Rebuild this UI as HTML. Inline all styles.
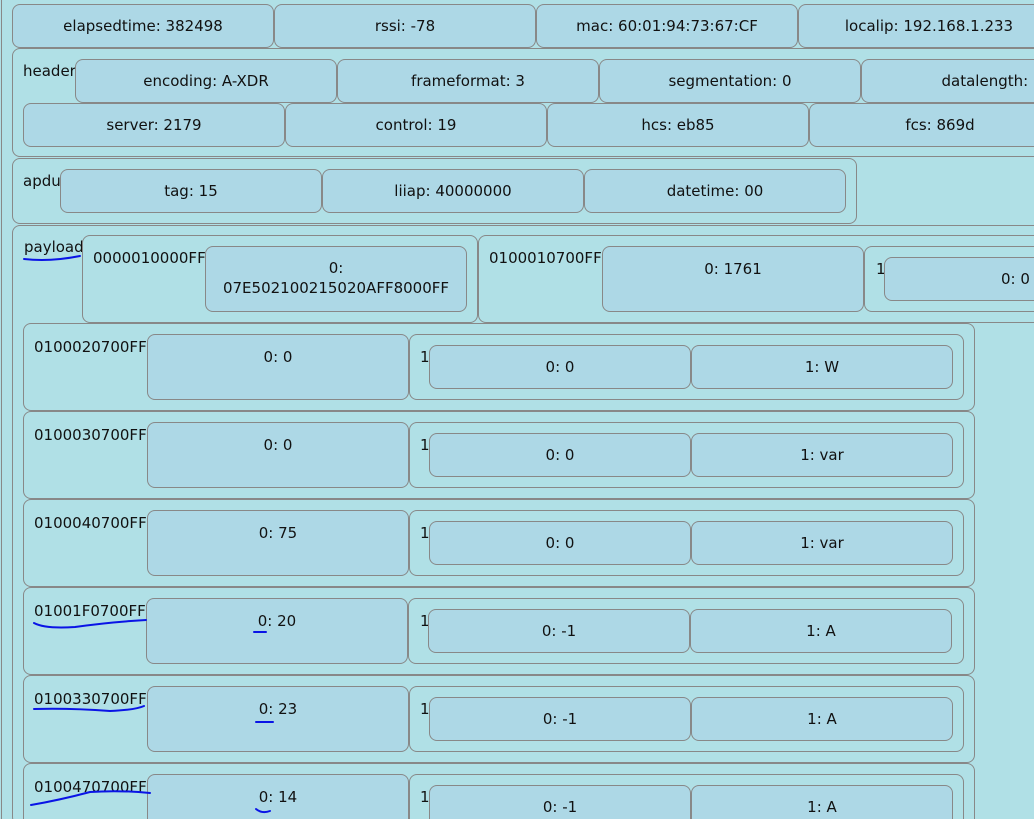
<!DOCTYPE html>
<html style="overflow:hidden;height:819px"><head><meta charset="utf-8"><style>
body{margin:0;width:1034px;height:819px;overflow:hidden;background:#b0e0e6;font-family:"DejaVu Sans","Liberation Sans",sans-serif;font-size:15px;color:#111;position:relative}
.b{position:absolute;box-sizing:border-box;border:1px solid #888;border-radius:8px;background:#add8e6;text-align:center}
.o{position:absolute;box-sizing:border-box;border:1px solid #888;border-radius:8px;background:#b0e0e6}
.c{line-height:43px}
.t{position:absolute;white-space:nowrap}
.p{padding-top:12px;line-height:20px}
</style></head><body>
<div style="position:absolute;left:1px;top:0;width:1px;height:819px;background:#888"></div>
<div class="b c" style="left:12px;top:4px;width:262px;height:44px">elapsedtime: 382498</div>
<div class="b c" style="left:274px;top:4px;width:262px;height:44px">rssi: -78</div>
<div class="b c" style="left:536px;top:4px;width:262px;height:44px">mac: 60:01:94:73:67:CF</div>
<div class="b c" style="left:798px;top:4px;width:262px;height:44px">localip: 192.168.1.233</div>

<div class="o" style="left:12px;top:48px;width:1040px;height:109px"></div>
<div class="t" style="left:23px;top:62px">header</div>
<div class="b c" style="left:75px;top:59px;width:262px;height:44px">encoding: A-XDR</div>
<div class="b c" style="left:337px;top:59px;width:262px;height:44px">frameformat: 3</div>
<div class="b c" style="left:599px;top:59px;width:262px;height:44px">segmentation: 0</div>
<div class="b c" style="left:861px;top:59px;width:262px;height:44px">datalength: 5</div>
<div class="b c" style="left:23px;top:103px;width:262px;height:44px">server: 2179</div>
<div class="b c" style="left:285px;top:103px;width:262px;height:44px">control: 19</div>
<div class="b c" style="left:547px;top:103px;width:262px;height:44px">hcs: eb85</div>
<div class="b c" style="left:809px;top:103px;width:262px;height:44px">fcs: 869d</div>

<div class="o" style="left:12px;top:158px;width:845px;height:66px"></div>
<div class="t" style="left:23px;top:172px">apdu</div>
<div class="b c" style="left:60px;top:169px;width:262px;height:44px">tag: 15</div>
<div class="b c" style="left:322px;top:169px;width:262px;height:44px">liiap: 40000000</div>
<div class="b c" style="left:584px;top:169px;width:262px;height:44px">datetime: 00</div>

<div class="o" style="left:12px;top:225px;width:1040px;height:600px"></div>
<div class="t" style="left:24px;top:238px">payload</div>

<div class="o" style="left:82px;top:235px;width:396px;height:88px"></div>
<div class="t" style="left:93px;top:249px">0000010000FF</div>
<div class="b p" style="left:205px;top:246px;width:262px;height:66px;padding-top:11px">0:<br>07E502100215020AFF8000FF</div>
<div class="o" style="left:478px;top:235px;width:600px;height:88px"></div>
<div class="t" style="left:489px;top:249px">0100010700FF</div>
<div class="b p" style="left:602px;top:246px;width:262px;height:66px">0: 1761</div>
<div class="o" style="left:864px;top:246px;width:300px;height:66px"></div>
<div class="t" style="left:876px;top:260px">1</div>
<div class="b c" style="left:884px;top:257px;width:262px;height:44px;text-align:left;padding-left:116px">0: 0</div>

<div class="o" style="left:23px;top:323px;width:952px;height:88px"></div>
<div class="t" style="left:34px;top:338px">0100020700FF</div>
<div class="b p" style="left:147px;top:334px;width:262px;height:66px">0: 0</div>
<div class="o" style="left:409px;top:334px;width:555px;height:66px"></div>
<div class="t" style="left:420px;top:348px">1</div>
<div class="b c" style="left:429px;top:345px;width:262px;height:44px">0: 0</div>
<div class="b c" style="left:691px;top:345px;width:262px;height:44px">1: W</div>

<div class="o" style="left:23px;top:411px;width:952px;height:88px"></div>
<div class="t" style="left:34px;top:426px">0100030700FF</div>
<div class="b p" style="left:147px;top:422px;width:262px;height:66px">0: 0</div>
<div class="o" style="left:409px;top:422px;width:555px;height:66px"></div>
<div class="t" style="left:420px;top:436px">1</div>
<div class="b c" style="left:429px;top:433px;width:262px;height:44px">0: 0</div>
<div class="b c" style="left:691px;top:433px;width:262px;height:44px">1: var</div>

<div class="o" style="left:23px;top:499px;width:952px;height:88px"></div>
<div class="t" style="left:34px;top:514px">0100040700FF</div>
<div class="b p" style="left:147px;top:510px;width:262px;height:66px">0: 75</div>
<div class="o" style="left:409px;top:510px;width:555px;height:66px"></div>
<div class="t" style="left:420px;top:524px">1</div>
<div class="b c" style="left:429px;top:521px;width:262px;height:44px">0: 0</div>
<div class="b c" style="left:691px;top:521px;width:262px;height:44px">1: var</div>

<div class="o" style="left:23px;top:587px;width:952px;height:88px"></div>
<div class="t" style="left:34px;top:602px">01001F0700FF</div>
<div class="b p" style="left:146px;top:598px;width:262px;height:66px">0: 20</div>
<div class="o" style="left:408px;top:598px;width:556px;height:66px"></div>
<div class="t" style="left:420px;top:612px">1</div>
<div class="b c" style="left:428px;top:609px;width:262px;height:44px">0: -1</div>
<div class="b c" style="left:690px;top:609px;width:262px;height:44px">1: A</div>

<div class="o" style="left:23px;top:675px;width:952px;height:88px"></div>
<div class="t" style="left:34px;top:690px">0100330700FF</div>
<div class="b p" style="left:147px;top:686px;width:262px;height:66px">0: 23</div>
<div class="o" style="left:409px;top:686px;width:555px;height:66px"></div>
<div class="t" style="left:420px;top:700px">1</div>
<div class="b c" style="left:429px;top:697px;width:262px;height:44px">0: -1</div>
<div class="b c" style="left:691px;top:697px;width:262px;height:44px">1: A</div>

<div class="o" style="left:23px;top:763px;width:952px;height:88px"></div>
<div class="t" style="left:34px;top:778px">0100470700FF</div>
<div class="b p" style="left:147px;top:774px;width:262px;height:66px">0: 14</div>
<div class="o" style="left:409px;top:774px;width:555px;height:66px"></div>
<div class="t" style="left:420px;top:788px">1</div>
<div class="b c" style="left:429px;top:785px;width:262px;height:44px">0: -1</div>
<div class="b c" style="left:691px;top:785px;width:262px;height:44px">1: A</div>

<svg style="position:absolute;left:0;top:0" width="1034" height="819">
<g fill="none" stroke="#0a14e6" stroke-width="2" stroke-linecap="round">
<path d="M24 259 Q50 262 80 256"/>
<path d="M34 623 Q45 629 75 627 Q110 622 146 620"/>
<path d="M254 632 L266 632"/>
<path d="M34 709 Q70 708 110 711 Q135 710 144 706"/>
<path d="M256 722 L273 722"/>
<path d="M31 805 Q60 800 90 792 Q120 790 150 793"/>
<path d="M256 809 Q262 814 270 811"/>
</g></svg>
</body></html>
